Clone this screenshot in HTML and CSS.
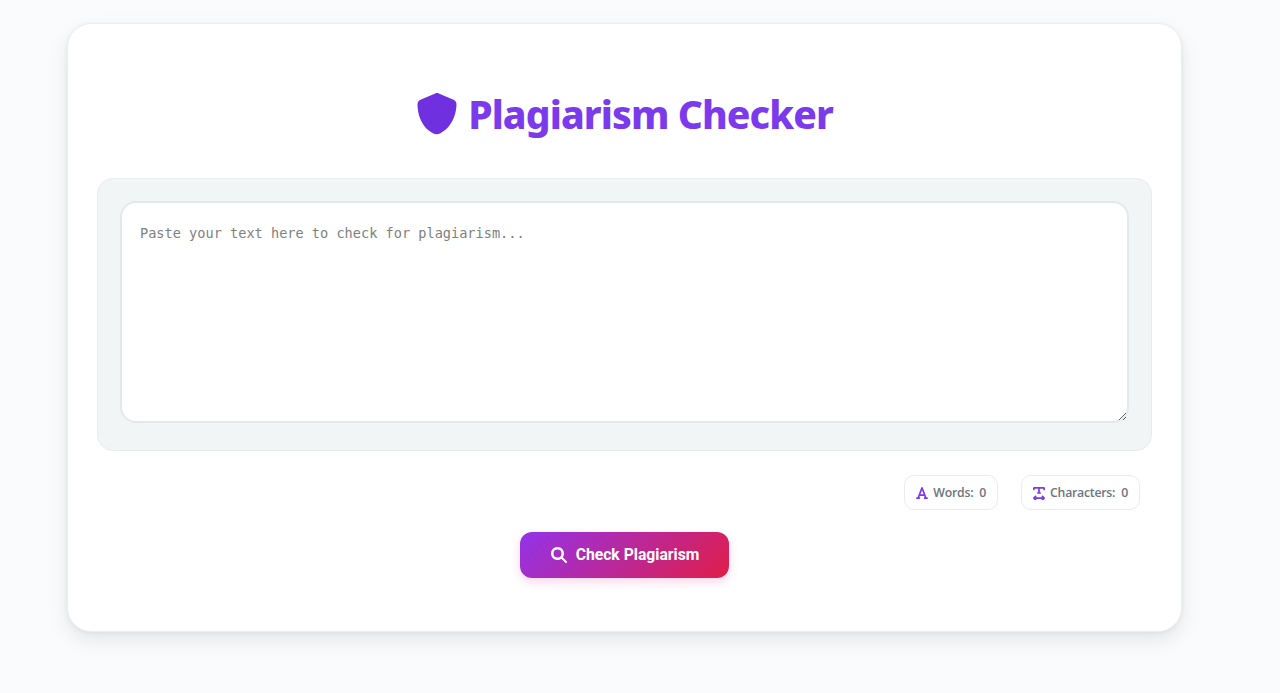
FILE: index.html
```html
<!DOCTYPE html>
<html lang="en">
<head>
<meta charset="utf-8">
<title>Plagiarism Checker</title>
<link rel="stylesheet" href="styles.css">
</head>
<body>
<main class="card">
  <h1 class="title">
    <svg class="title-icon" viewBox="0 0 40 42" aria-hidden="true">
      <path fill="#6f30e0" d="M20 0c.6 0 1.200.1 1.800.4l14.700 6.400c1.800.8 3 2.500 3 4.500-.1 8-3.300 22.500-16.500 29.100-2.300 1.100-4.300 1.100-6.600 0C3.200 33.800.6 19.300.5 11.300c0-2 1.200-3.700 3-4.500L18.200.4C18.800.1 19.400 0 20 0z"/>
    </svg>
    <span>Plagiarism Checker</span>
  </h1>
  <section class="panel">
    <textarea class="input" placeholder="Paste your text here to check for plagiarism..."></textarea>
  </section>
  <div class="stats">
    <div class="stat">
      <svg class="stat-icon" viewBox="0 0 448 512" aria-hidden="true"><path d="M254 52.800C249.300 40.300 237.300 32 224 32s-25.300 8.300-30 20.800L57.800 416H32c-17.700 0-32 14.300-32 32s14.300 32 32 32h96c17.700 0 32-14.300 32-32s-14.300-32-32-32h-1.800l18-48h159.600l18 48H320c-17.700 0-32 14.300-32 32s14.300 32 32 32h96c17.700 0 32-14.300 32-32s-14.300-32-32-32h-25.800L254 52.800zM279.800 304H168.200L224 155.100 279.800 304z"/></svg>
      <span class="stat-label">Words:</span><span>0</span>
    </div>
    <div class="stat">
      <svg class="stat-icon" viewBox="0 0 448 512" aria-hidden="true"><path d="M64 128V96h128v128h-16c-17.700 0-32 14.300-32 32s14.300 32 32 32h96c17.700 0 32-14.300 32-32s-14.300-32-32-32h-16V96h128v32c0 17.700 14.300 32 32 32s32-14.300 32-32V80c0-26.500-21.500-48-48-48H224 48C21.500 32 0 53.500 0 80v48c0 17.700 14.300 32 32 32s32-14.300 32-32zM9.400 425.400c-12.500 12.500-12.500 32.800 0 45.300l64 64c9.200 9.200 22.900 11.900 34.900 6.900S128 524.900 128 512V480h192v32c0 12.900 7.800 24.600 19.800 29.600s25.700 2.200 34.900-6.900l64-64c12.500-12.500 12.500-32.800 0-45.300l-64-64c-9.200-9.200-22.900-11.900-34.900-6.900S320 371.100 320 384v32H128v-32c0-12.900-7.800-24.600-19.800-29.600s-25.700-2.200-34.900 6.900l-64 64z"/></svg>
      <span class="stat-label">Characters:</span><span>0</span>
    </div>
  </div>
  <div class="actions">
    <button class="check" type="button">
      <svg class="check-icon" viewBox="0 0 512 512" aria-hidden="true"><path d="M416 208c0 45.900-14.900 88.300-40 122.700L502.600 457.400c12.500 12.500 12.500 32.800 0 45.300s-32.800 12.500-45.300 0L330.700 376c-34.400 25.200-76.800 40-122.700 40C93.100 416 0 322.900 0 208S93.100 0 208 0s208 93.100 208 208zM208 336a128 128 0 1 0 0-256 128 128 0 1 0 0 256z"/></svg>
      <span>Check Plagiarism</span>
    </button>
  </div>
</main>
</body>
</html>
```
FILE: styles.css
```css
* { box-sizing: border-box; }
html, body { margin: 0; height: 100%; }
body {
  background: #fafbfd;
  overflow: hidden;
  font-family: "Open Sans", "Noto Sans", sans-serif;
}
.card {
  width: 1115px;
  height: 609px;
  margin: 23px 0 0 67px;
  padding: 0 29px;
  background: #fff;
  border: 1px solid #ebeef1;
  border-radius: 24px;
  box-shadow: 0 8px 20px rgba(0, 0, 0, 0.09), 0 1px 4px rgba(0, 0, 0, 0.05);
  display: flex;
  flex-direction: column;
}
.title {
  margin: 64px 0 0;
  height: 50px;
  display: flex;
  align-items: center;
  justify-content: center;
  gap: 11px;
  color: #7c3aed;
  font-family: "Noto Sans", sans-serif;
  font-size: 39px;
  font-weight: 800;
  letter-spacing: -0.9px;
}
.title-icon { width: 40px; height: 42px; flex: none; margin: 2px 0 0 1px; }
.panel {
  margin-top: 40px;
  height: 273px;
  padding: 22px 22px 0;
  background: #f1f5f6;
  border: 1px solid #e9eced;
  border-radius: 16px;
}
.input {
  display: block;
  width: 100%;
  height: 222px;
  padding: 18px 18px;
  background: #fff;
  border: 2px solid #e3e8ea;
  border-radius: 16px;
  font-family: "DejaVu Sans Mono", monospace;
  font-size: 13.6px;
  line-height: 24px;
  outline: none;
}
.input::placeholder { color: #808080; }
.stats {
  display: flex;
  justify-content: flex-end;
  gap: 23px;
  margin-top: 24px;
  padding-right: 12px;
}
.stat {
  height: 35px;
  padding: 0 11px;
  display: flex;
  align-items: center;
  gap: 5px;
  background: #fff;
  border: 1px solid #e9ecef;
  border-radius: 10px;
  color: #6c757d;
  font-size: 12.3px;
  font-weight: 600;
  letter-spacing: -0.25px;
}
.stat-label { margin-right: 1px; }
.stat-icon { width: 12px; height: 14px; fill: #7c3aed; flex: none; }
.actions {
  display: flex;
  justify-content: center;
  margin-top: 22px;
}
.check {
  width: 209px;
  height: 46px;
  padding: 0 0 1px 1px;
  display: flex;
  align-items: center;
  justify-content: center;
  gap: 9px;
  border: 0;
  border-radius: 12px;
  background: linear-gradient(135deg, #9333ea, #e11d48);
  box-shadow: 0 4px 10px rgba(225, 29, 140, 0.18);
  color: #fff;
  font-family: Roboto, "Liberation Sans", sans-serif;
  font-size: 15.7px;
  font-weight: 700;
}
.check-icon { width: 16px; height: 16px; fill: #fff; flex: none; }
```
